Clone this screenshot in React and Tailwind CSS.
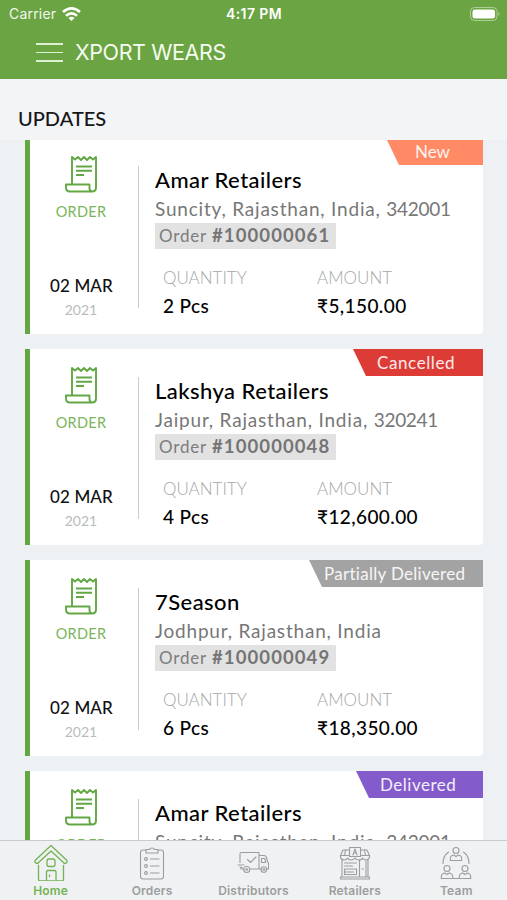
const orders = [
  { name: 'Amar Retailers', place: 'Suncity, Rajasthan, India, ', pin: '342001', id: '#100000061', qty: '2 Pcs', amount: '5,150.00', status: 'New', tag: 'w-[97px] pl-[29px] bg-[#ff8a65]' },
  { name: 'Lakshya Retailers', place: 'Jaipur, Rajasthan, India, ', pin: '320241', id: '#100000048', qty: '4 Pcs', amount: '12,600.00', status: 'Cancelled', tag: 'w-[130px] pl-[24px] tracking-[0.6px] bg-[#dc3b36]' },
  { name: '7Season', place: 'Jodhpur, Rajasthan, India', pin: '', id: '#100000049', qty: '6 Pcs', amount: '18,350.00', status: 'Partially Delivered', tag: 'w-[174px] pl-[15px] tracking-[0.3px] bg-[#a3a3a3]' },
  { name: 'Amar Retailers', place: 'Suncity, Rajasthan, India, ', pin: '342001', id: '#100000062', qty: '2 Pcs', amount: '5,150.00', status: 'Delivered', tag: 'w-[127px] pl-[24px] tracking-[0.5px] bg-[#845bcb]' },
];

function ReceiptIcon() {
  return (
    <svg width="34" height="38" viewBox="0 0 34 38" fill="none" stroke="#62a744" strokeWidth="1.9" strokeLinejoin="round">
      <path d="M8 29.500V2l3 2.500L14 2l3 3 3-3 3 3 3-3 3 2.500L32 2v30.500q0 4-4 4H6q-4 0-4-4v-3H25.500v3.500q0 3 2.500 3.500" />
      <path d="M12 11.500h16M12 15.800h16M12 20h8" />
    </svg>
  );
}

function OrderCard({ order }) {
  return (
    <article className="relative flex h-[196px] shrink-0 rounded-r border-l-[5px] border-[#62a744] bg-white">
      <div className="flex w-[102px] flex-col items-center pt-[17px]">
        <ReceiptIcon />
        <span className="mt-[8px] text-[14.500px] leading-[22px] tracking-[0.3px] text-[#7ab55c]">ORDER</span>
        <span className="mt-[51px] whitespace-nowrap pl-px text-[17px] font-medium leading-[24px] tracking-[0.1px] text-[#111]">02 MAR</span>
        <span className="text-[14px] leading-[24px] text-[#b9bcbc]">2021</span>
      </div>
      <div className="ml-[6px] mt-[28px] h-[142px] w-px bg-[#cacaca]" />
      <div className="ml-[16px] flex flex-col items-start whitespace-nowrap pt-[27px]">
        <h2 className="text-[22px] font-medium leading-[30px] tracking-[0.45px] text-black">{order.name}</h2>
        <p className="text-[19px] leading-[27px] tracking-[0.8px] text-[#777]">
          {order.place}
          <span className="tracking-[-0.3px]">{order.pin}</span>
        </p>
        <p className="mt-px flex h-[26px] w-[181px] items-center bg-[#e2e2e2] pl-[4px] text-[17px] text-[#7d7d7d]">
          <span className="mr-[5px] tracking-[0.8px]">Order</span>
          <b className="text-[18.500px] font-bold tracking-[1.1px] text-[#747474]">{order.id}</b>
        </p>
        <dl className="ml-[8px] mt-[15px] flex">
          <div className="w-[154px]">
            <dt className="text-[17px] font-light leading-[28px] text-[#a4a8a8]">QUANTITY</dt>
            <dd className="text-[19px] font-medium leading-[28px] tracking-[0.4px] text-black">{order.qty}</dd>
          </div>
          <div>
            <dt className="text-[17px] font-light leading-[28px] text-[#a4a8a8]">AMOUNT</dt>
            <dd className="text-[19px] font-medium leading-[28px] tracking-[0.4px] text-black">₹{order.amount}</dd>
          </div>
        </dl>
      </div>
      <div className={`absolute right-0 top-0 h-[27px] whitespace-nowrap text-[17px] leading-[27px] text-white/90 [clip-path:polygon(0_0,100%_0,100%_100%,13px_100%)] ${order.tag}`}>
        {order.status}
      </div>
    </article>
  );
}

function TabSvg({ children, w = 36 }) {
  return (
    <svg width={w} height="40" viewBox={`0 0 ${w} 40`} fill="none" stroke="currentColor" strokeWidth="1.1" strokeLinejoin="round" strokeLinecap="round">
      {children}
    </svg>
  );
}

const HomeIcon = () => (
  <TabSvg>
    <g strokeWidth="1.3">
      <path d="M18 4.500 34 19.500q.8 2.500-2.500 3L18 10 4.500 22.500Q1.200 22 2 19.500Z" />
      <path d="M5.500 24.500v13.500q0 2 2 2h21q2 0 2-2V24.500" />
      <rect x="14" y="18" width="8" height="7.500" rx="2" />
      <path d="M13.500 39.500V31q0-1.500 1.500-1.500h6.500q1.500 0 1.500 1.500v8.500M16.500 34v1.500" />
    </g>
  </TabSvg>
);

const ClipboardIcon = () => (
  <TabSvg>
    <path d="M12 9H9Q6.500 9 6.500 11.500v24Q6.500 38 9 38h18q2.500 0 2.500-2.500v-24Q29.500 9 27 9h-3" />
    <path d="M12 12V8.500h3.500Q16 7 18 7t2.500 1.500H24V12Z" />
    {[18, 25, 32].map((y) => (
      <g key={y}>
        <circle cx="12" cy={y} r="1.400" />
        <path d={`M16.500 ${y}h8.500`} />
      </g>
    ))}
  </TabSvg>
);

const TruckIcon = () => (
  <TabSvg>
    <path d="M5 21.500V13q0-1.500 1.500-1.500h17.500V28H14.500M24 14.500h5q2 0 2.500 2l1 4 1 1.500v6H31M26.500 17.500h3.200l1 4h-4.200zM24 28h2.500M9 28H6v-2" />
    <circle cx="11.700" cy="28.500" r="3" /><circle cx="11.700" cy="28.500" r=".8" />
    <circle cx="28.800" cy="28.500" r="2.800" /><circle cx="28.800" cy="28.500" r=".8" />
    <path d="m12.500 18.500 3 3 5.500-5.500M3 24h6M5 26.500h2" />
  </TabSvg>
);

const StoreIcon = () => (
  <TabSvg>
    <path d="M12 9H6L3.500 14.500v2q1 2.500 3.700 2.500 2.300 0 3.300-2 1 2 3.500 2t4-2q1 2 4 2t3.500-2q1 2 3.500 2t3.500-2.500v-2L30 9h-6" />
    <path d="M12.500 6.500h11v9h-11zM3.500 14.500h9M23.500 14.500h9M16 14l2-6 2 6M16.500 12h3M8.500 9l-1 5.500M27.500 9l1 5.500" />
    <path d="M5 19v17M31 19v17M22.500 19v17M3.500 36h29v2h-29zM7.500 22h12M7.500 25h8M7.500 28h12v5.500h-12zM7.500 31h9M29 20v16M25 28h1.500" />
  </TabSvg>
);

const Person = ({ x, y }) => (
  <g transform={`translate(${x} ${y})`}>
    <circle cx="0" cy="-4" r="3" />
    <path d="M-5.700 6V4.500q0-3.500 3.500-4L0 2 2.200.5q3.500.5 3.500 4V6Z" />
  </g>
);

const TeamIcon = () => (
  <TabSvg>
    <Person x={18} y={13.500} />
    <Person x={9} y={31.500} />
    <Person x={27} y={31.500} />
    <path d="M10.500 11Q5 15 5 22.500M25.500 11Q31 15 31 22.500M15 37.500h6" />
  </TabSvg>
);

const tabs = [
  { label: 'Home', Icon: HomeIcon, color: 'text-[#74b354]' },
  { label: 'Orders', Icon: ClipboardIcon, color: 'text-[#9b9e9e]' },
  { label: 'Distributors', Icon: TruckIcon, color: 'text-[#9b9e9e]' },
  { label: 'Retailers', Icon: StoreIcon, color: 'text-[#9b9e9e]' },
  { label: 'Team', Icon: TeamIcon, color: 'text-[#9b9e9e]' },
];

export default function App() {
  return (
    <div className="flex h-[900px] w-[507px] flex-col overflow-hidden bg-[#edf1f4] font-['Lato','Noto_Sans',sans-serif]">
      <header className="h-[79px] shrink-0 bg-[#6ba443] font-['Inter',sans-serif] text-white">
        <div className="grid h-[27px] grid-cols-3 items-center pl-[9px] pr-[6px]">
          <div className="flex items-center gap-[6px] text-[14px] text-white/90">
            <span className="tracking-[0.2px]">Carrier</span>
            <svg width="19" height="14" viewBox="0 0 19 14" fill="none" stroke="white" strokeWidth="2.700">
              <path d="M1 5Q9.500-2.200 18 5M4 8.700q5.500-4.600 11 0" />
              <path d="M6.500 11q3-2.300 6 0l-3 3z" fill="white" stroke="none" />
            </svg>
          </div>
          <span className="pr-[2px] text-center text-[14px] font-semibold tracking-[0.4px]">4:17 PM</span>
          <svg className="justify-self-end" width="31" height="14" viewBox="0 0 31 14">
            <rect x=".5" y=".5" width="26.500" height="13" rx="4" fill="none" stroke="white" strokeOpacity=".45" />
            <rect x="2.500" y="2.500" width="22.500" height="9" rx="2.300" fill="white" />
            <path d="M28.500 4.800q2 2.200 0 4.400z" fill="white" fillOpacity=".5" />
          </svg>
        </div>
        <div className="flex h-[51px] items-center pl-[36px]">
          <div className="flex flex-col gap-[7px]">
            <i className="h-[1.500px] w-[27px] bg-[#deefd2]" />
            <i className="h-[1.500px] w-[27px] bg-[#deefd2]" />
            <i className="h-[1.500px] w-[27px] bg-[#deefd2]" />
          </div>
          <h1 className="ml-[12px] text-[21.500px] font-normal tracking-[-0.4px] text-[#f5fbef]">XPORT WEARS</h1>
        </div>
      </header>
      <h2 className="flex h-[61px] shrink-0 items-center bg-[#f2f4f6] pl-[18px] pt-[17px] text-[20px] font-medium text-[#161616]">UPDATES</h2>
      <main className="min-h-0 flex-1 overflow-hidden pl-[25px] pr-[24px]">
        <div className="-mt-[2px] flex flex-col gap-[15px]">
          {orders.map((order, i) => (
            <OrderCard key={i} order={order} />
          ))}
        </div>
      </main>
      <nav className="grid h-[60px] shrink-0 grid-cols-5 border-t border-[#c9cccd] bg-[#eff1f2]">
        {tabs.map(({ label, Icon, color }) => (
          <div key={label} className={`flex flex-col items-center ${color}`}>
            <div className="h-[43px]"><Icon /></div>
            <span className="font-['Inter',sans-serif] text-[12px] font-semibold leading-[14px] tracking-[0.2px]">{label}</span>
          </div>
        ))}
      </nav>
    </div>
  );
}
